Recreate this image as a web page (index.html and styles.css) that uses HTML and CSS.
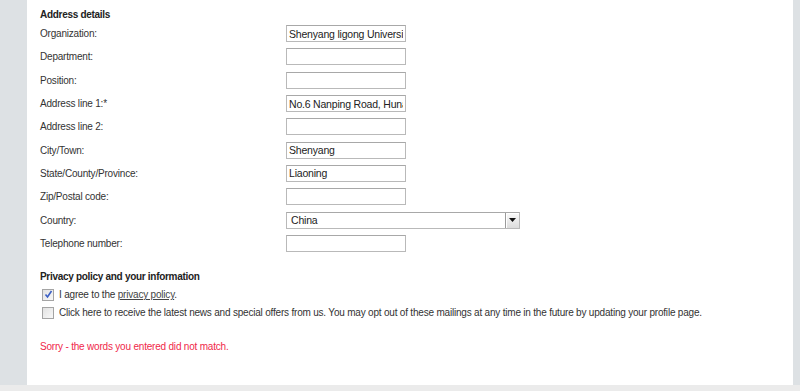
FILE: index.html
```html
<!DOCTYPE html>
<html lang="en">
<head>
  <meta charset="UTF-8">
  <title>Address details</title>
  <link rel="stylesheet" href="styles.css">
</head>
<body>
  <div class="page">
    <main class="panel">
      <!-- Address -->
      <h3 class="section-title">Address details</h3>
      <form class="address-form">
        <div class="form-row">
          <label for="org">Organization:</label>
          <input type="text" id="org" value="Shenyang ligong University">
        </div>
        <div class="form-row">
          <label for="dept">Department:</label>
          <input type="text" id="dept">
        </div>
        <div class="form-row">
          <label for="pos">Position:</label>
          <input type="text" id="pos">
        </div>
        <div class="form-row">
          <label for="addr1">Address line 1:*</label>
          <input type="text" id="addr1" value="No.6 Nanping Road, Hunan">
        </div>
        <div class="form-row">
          <label for="addr2">Address line 2:</label>
          <input type="text" id="addr2">
        </div>
        <div class="form-row">
          <label for="city">City/Town:</label>
          <input type="text" id="city" value="Shenyang">
        </div>
        <div class="form-row">
          <label for="state">State/County/Province:</label>
          <input type="text" id="state" value="Liaoning">
        </div>
        <div class="form-row">
          <label for="zip">Zip/Postal code:</label>
          <input type="text" id="zip">
        </div>
        <div class="form-row">
          <label>Country:</label>
          <div class="select">
            <span class="select-value">China</span>
            <span class="select-arrow">
              <svg width="7" height="4" viewBox="0 0 7 4"><path d="M0 0h7L3.5 4z" fill="#111"/></svg>
            </span>
          </div>
        </div>
        <div class="form-row">
          <label for="tel">Telephone number:</label>
          <input type="text" id="tel">
        </div>
      </form>

      <!-- Privacy -->
      <h3 class="section-title privacy-title">Privacy policy and your information</h3>
      <div class="checks">
        <div class="check-row">
          <span class="check checked">
            <svg width="9" height="9" viewBox="0 0 9 9"><path d="M1.5 4.5l2 2.5 4-6" fill="none" stroke="#3b5fc4" stroke-width="1.6"/></svg>
          </span>
          <span>I agree to the <a href="#">privacy policy</a>.</span>
        </div>
        <div class="check-row">
          <span class="check"></span>
          <span>Click here to receive the latest news and special offers from us. You may opt out of these mailings at any time in the future by updating your profile page.</span>
        </div>
      </div>

      <p class="error">Sorry - the words you entered did not match.</p>
    </main>
  </div>
  <div class="bottom-strip"></div>
</body>
</html>
```

FILE: styles.css
```css
/* General */
body {
  margin: 0;
  font-family: "Liberation Sans", Arial, sans-serif;
  font-size: 10px;
  letter-spacing: -0.2px;
  color: #333;
  background-color: #ebebeb;
}

.page {
  background-color: #dde1e4;
  height: 385px;
  padding-left: 27px;
  padding-right: 7px;
}

.panel {
  background: white;
  height: 385px;
  padding: 8px 0 0 13px;
  box-sizing: border-box;
}

.section-title {
  margin: 0;
  font-size: 10px;
  letter-spacing: -0.3px;
  line-height: 14px;
  font-weight: bold;
  color: #222;
}

/* Address form */
.address-form {
  display: grid;
  grid-auto-rows: 23.3px;
}

.form-row {
  display: flex;
  align-items: center;
}

.form-row label {
  width: 246px;
  flex-shrink: 0;
}

.form-row input {
  width: 120px;
  height: 17px;
  box-sizing: border-box;
  margin: 0;
  padding: 0 2px;
  border: 1px solid #b9b9b9;
  border-top-color: #a8a8a8;
  font-family: "Liberation Sans", Arial, sans-serif;
  font-size: 10.5px;
  letter-spacing: -0.2px;
  color: #222;
  background: white;
}

.select {
  display: flex;
  align-items: stretch;
  width: 234px;
  height: 17px;
  box-sizing: border-box;
  border: 1px solid #b9b9b9;
  border-top-color: #a8a8a8;
  font-size: 10.5px;
  color: #222;
}

.select-value {
  flex: 1;
  padding-left: 4px;
  line-height: 15px;
}

.select-arrow {
  width: 13px;
  display: flex;
  align-items: center;
  justify-content: center;
  border-left: 1px solid #9a9a9a;
  background: linear-gradient(#fafafa, #dcdcdc);
  box-shadow: inset 1px 1px 0 #fff;
}

/* Privacy */
.privacy-title {
  margin-top: 15px;
}

.checks {
  margin-top: 2px;
}

.check-row {
  display: flex;
  align-items: center;
  gap: 5px;
  height: 18px;
  padding-left: 2px;
}

.check {
  width: 10px;
  height: 10px;
  border: 1px solid #a4a4a4;
  background: linear-gradient(135deg, #e2e2e2, #f8f8f8);
  display: flex;
  align-items: center;
  justify-content: center;
  flex-shrink: 0;
}

.check-row a {
  color: #444;
}

.error {
  margin: 19px 0 0;
  color: #f0284a;
}

.bottom-strip {
  height: 6px;
}
```
